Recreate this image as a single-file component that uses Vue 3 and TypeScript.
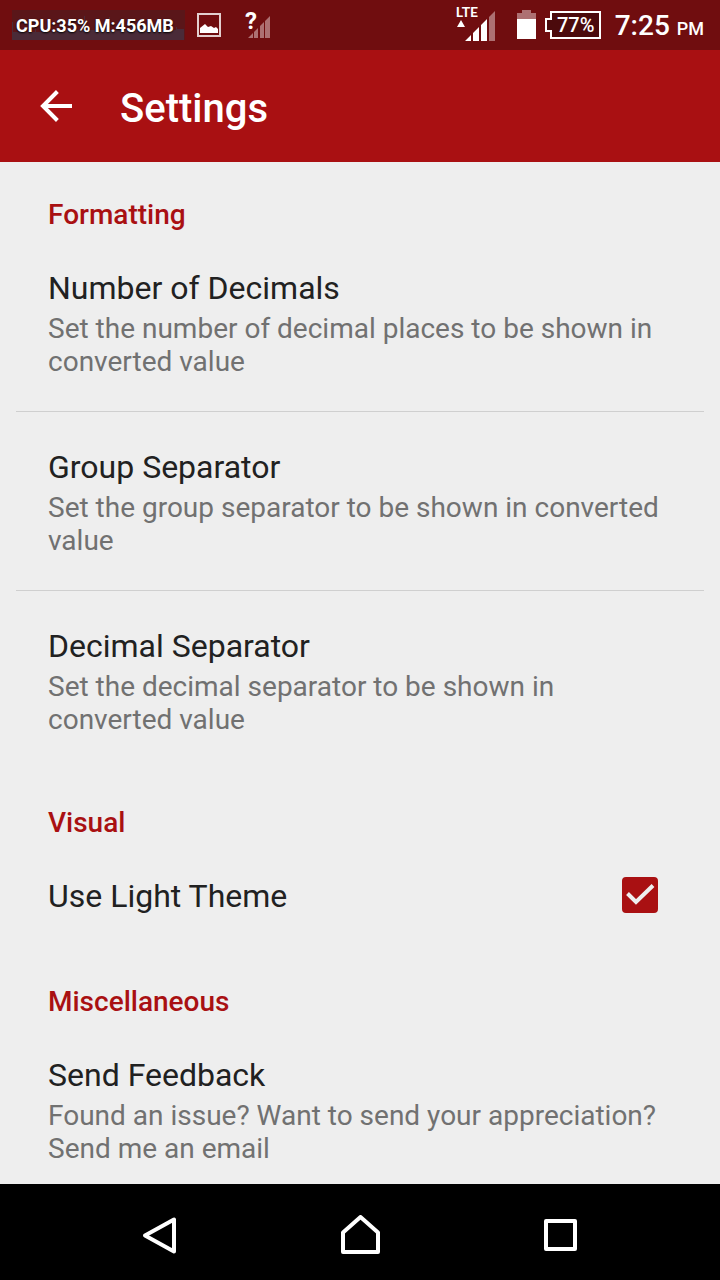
<script setup lang="ts">
import { ref } from 'vue'

interface Preference {
  title: string
  summary: string
}

const formatting: Preference[] = [
  { title: 'Number of Decimals', summary: 'Set the number of decimal places to be shown in converted value' },
  { title: 'Group Separator', summary: 'Set the group separator to be shown in converted value' },
  { title: 'Decimal Separator', summary: 'Set the decimal separator to be shown in converted value' },
]
const misc: Preference[] = [
  { title: 'Send Feedback', summary: 'Found an issue? Want to send your appreciation? Send me an email' },
]
const lightTheme = ref(true)
</script>

<template>
  <div class="screen">
    <div class="status">
      <span class="cpu">
        <svg class="graph" viewBox="0 0 173 30" preserveAspectRatio="none" aria-hidden="true">
          <path fill="#4a2b38" d="M0 12h1v10h12v-3h1v3h9v-4h1v4h20v-2h14v-5h1v5h13V6h1v14h10v-6h2v6h12V7h1v13h9v-4h1v4h11v-2h12v-4h1v5h24v2h4v-4h1v3h3v-3h1v2h7v11H0z" />
        </svg>
        <span class="cpu-text">CPU:35% M:456MB</span>
      </span>
      <svg class="photo" width="24" height="24" viewBox="0 0 24 24" aria-hidden="true">
        <rect x="1" y="1" width="22" height="22" fill="none" stroke="#e3cfcf" stroke-width="2" />
        <path fill="#fff" d="M3 20v-5l5-4 3 3 3-1 3 2 2-1 2 2v4z" />
      </svg>
      <span class="unknown">
        <svg width="28" height="28" viewBox="0 0 28 28" aria-hidden="true">
          <path fill="#ad7072" d="M3 27l5-5v5zM9 21l4-4v10h-4zM15 15l4-4v16h-4zM20 10l5-5v22h-5z" />
        </svg>
        <span class="question">?</span>
      </span>
      <span class="lte">
        <svg width="40" height="36" viewBox="0 0 40 36" aria-hidden="true">
          <path fill="#fff" d="M0 20l4-7 4 7zM8 34l6-6v6zM16 26l6-6v14h-6zM24 18l6-6v22h-6z" />
          <path fill="#ad7072" d="M32 10l6-6v30h-6z" />
        </svg>
        <span class="lte-text">LTE</span>
      </span>
      <svg class="battery" width="19" height="30" viewBox="0 0 19 30" aria-hidden="true">
        <path fill="#ad7072" d="M5 0h9v3h5v6H0V3h5z" />
        <path fill="#fff" d="M0 9h19v20H0z" />
      </svg>
      <span class="percent">
        <svg width="56" height="28" viewBox="0 0 56 28" aria-hidden="true">
          <path fill="#4b0a0c" stroke="#fff" stroke-width="2" d="M6 1h49v26H6v-7H1V8h5z" />
        </svg>
        <span class="percent-text">77%</span>
      </span>
      <span class="time">7:25 <small>PM</small></span>
    </div>

    <header class="toolbar">
      <button class="back" type="button" aria-label="Back">
        <svg width="32" height="32" viewBox="0 0 32 32" aria-hidden="true">
          <path fill="none" stroke="#fff" stroke-width="4" d="M17.4 1.5L3 16l14.4 14.5M3 16h29" />
        </svg>
      </button>
      <h1>Settings</h1>
    </header>

    <main class="content">
      <section>
        <h2>Formatting</h2>
        <button v-for="p in formatting" :key="p.title" class="item" type="button">
          <span class="title">{{ p.title }}</span>
          <span class="summary">{{ p.summary }}</span>
        </button>
      </section>
      <section>
        <h2>Visual</h2>
        <label class="item check-item">
          <span class="title">Use Light Theme</span>
          <span class="check">
            <input v-model="lightTheme" type="checkbox" />
            <svg v-if="lightTheme" viewBox="0 0 36 36" aria-hidden="true">
              <path fill="none" stroke="#eee" stroke-width="4" d="M5.500 16.500L14 25L31 8.500" />
            </svg>
          </span>
        </label>
      </section>
      <section>
        <h2>Miscellaneous</h2>
        <button v-for="p in misc" :key="p.title" class="item" type="button">
          <span class="title">{{ p.title }}</span>
          <span class="summary">{{ p.summary }}</span>
        </button>
      </section>
    </main>

    <nav class="navbar" aria-label="System">
      <button type="button" aria-label="Back">
        <svg width="40" height="40" viewBox="0 0 40 40" aria-hidden="true">
          <path fill="none" stroke="#fff" stroke-width="4" stroke-linejoin="round" d="M34 4.500v32L5 20.500z" />
        </svg>
      </button>
      <button type="button" aria-label="Home">
        <svg width="40" height="40" viewBox="0 0 40 40" aria-hidden="true">
          <path fill="none" stroke="#fff" stroke-width="4" stroke-linejoin="round" d="M20.500 2L38 17.500V37H3V17.500z" />
        </svg>
      </button>
      <button type="button" aria-label="Overview">
        <svg width="40" height="40" viewBox="0 0 40 40" aria-hidden="true">
          <rect x="6" y="6" width="29" height="28" fill="none" stroke="#fff" stroke-width="4" stroke-linejoin="round" />
        </svg>
      </button>
    </nav>
  </div>
</template>

<style>
body {
  margin: 0;
}
</style>

<style scoped>
.screen {
  display: flex;
  flex-direction: column;
  height: 100vh;
  background: #eee;
  color: #212121;
  font-family: Roboto, "Noto Sans", sans-serif;
}
svg {
  display: block;
}
button {
  border: 0;
  padding: 0;
  background: none;
  color: inherit;
  font: inherit;
  text-align: left;
  cursor: pointer;
}
.status {
  flex: none;
  display: flex;
  align-items: center;
  box-sizing: border-box;
  height: 50px;
  padding: 0 16px 0 12px;
  background: #700d0f;
  color: #fff;
  white-space: nowrap;
}
.cpu {
  position: relative;
  width: 173px;
  height: 30px;
  background: #5a1619;
}
.graph {
  position: absolute;
  inset: 0;
  width: 100%;
  height: 100%;
}
.cpu-text {
  position: relative;
  display: block;
  padding-left: 4px;
  font-size: 18px;
  font-weight: 700;
  line-height: 32px;
  text-shadow: 0 1px 2px #000;
}
.photo {
  margin-left: 12px;
}
.unknown {
  position: relative;
  margin-left: 24px;
}
.question {
  position: absolute;
  top: -4px;
  left: 0;
  font-size: 24px;
  font-weight: 700;
  line-height: 28px;
}
.lte {
  position: relative;
  margin-left: auto;
}
.lte-text {
  position: absolute;
  top: -1px;
  left: -1px;
  font-family: Lato, sans-serif;
  font-size: 14px;
  font-weight: 700;
  line-height: 12px;
}
.battery {
  margin-left: 20px;
}
.percent {
  position: relative;
  margin-left: 9px;
}
.percent-text {
  position: absolute;
  inset: 0 0 0 6px;
  text-align: center;
  font-size: 20px;
  font-weight: 500;
  line-height: 28px;
}
.time {
  margin-left: 14px;
  padding-top: 4px;
  font-size: 28px;
  font-weight: 500;
  line-height: 36px;
}
.time small {
  font-size: 18px;
}
.toolbar {
  flex: none;
  display: flex;
  align-items: center;
  gap: 48px;
  height: 112px;
  padding: 0 40px;
  background: #a91012;
  color: #fff;
}
h1 {
  margin: 0;
  font-size: 40px;
  font-weight: 500;
  line-height: 48px;
  padding-top: 6px;
}
.content {
  flex: 1;
  min-height: 0;
  overflow-y: auto;
  scrollbar-width: none;
  padding: 0 16px;
}
h2 {
  margin: 0;
  padding: 36px 32px 2px;
  color: #a91012;
  font-size: 28px;
  font-weight: 500;
  line-height: 33px;
}
.item {
  display: flex;
  flex-direction: column;
  gap: 5px;
  box-sizing: border-box;
  width: 100%;
  padding: 36px 32px 33px;
  border-bottom: 1px solid #cfcfcf;
}
.item:last-child {
  border-bottom-color: transparent;
}
.title {
  font-size: 32px;
  line-height: 38px;
}
.summary {
  color: #717171;
  font-size: 28px;
  line-height: 33px;
}
.check-item {
  flex-direction: row;
  align-items: flex-start;
  justify-content: space-between;
  padding-right: 46px;
}
.check {
  position: relative;
  width: 36px;
  height: 36px;
}
.check input {
  appearance: none;
  display: block;
  width: 100%;
  height: 100%;
  margin: 0;
  border: 4px solid #717171;
  border-radius: 4px;
}
.check input:checked {
  border-color: #a91012;
  background: #a91012;
}
.check svg {
  position: absolute;
  inset: 0;
  pointer-events: none;
}
.navbar {
  flex: none;
  display: grid;
  grid-template-columns: repeat(3, 1fr);
  height: 96px;
  padding: 0 60px;
  background: #000;
}
.navbar button {
  display: flex;
  align-items: center;
  justify-content: center;
  padding-top: 6px;
}
</style>
